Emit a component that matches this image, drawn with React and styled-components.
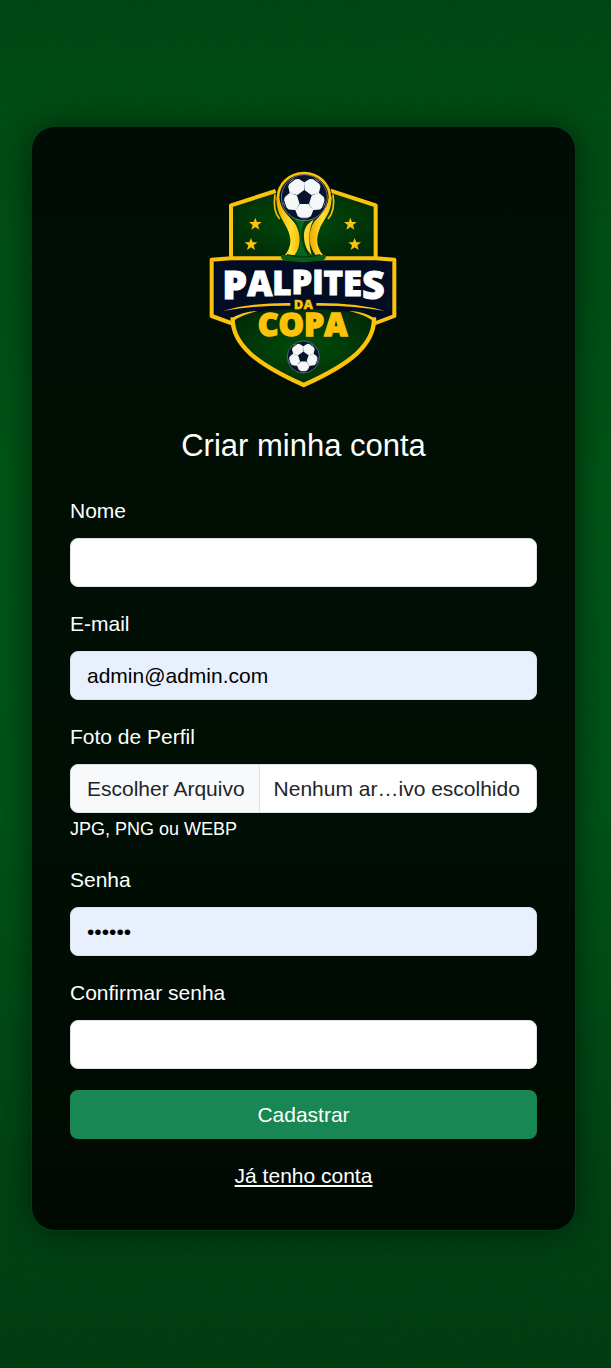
import React, { useState } from "react";
import styled, { createGlobalStyle } from "styled-components";

const GlobalStyle = createGlobalStyle`
  * {
    box-sizing: border-box;
  }
  body {
    margin: 0;
    background: #003d12;
    font-family: "Liberation Sans", Arial, sans-serif;
    font-size: 21px;
    color: #fff;
  }
`;

const Page = styled.main`
  position: relative;
  min-height: 100vh;
  padding: 126px 35px 137px 31px;
  background: linear-gradient(
    180deg,
    #004516 0%,
    #004c16 8%,
    #005519 35%,
    #00541a 60%,
    #004716 80%,
    #003f14 92%,
    #003a12 100%
  );
`;
const Grass = styled.svg`
  position: absolute;
  inset: 0;
  width: 100%;
  height: 100%;
  opacity: 0.15;
  pointer-events: none;
`;
const Card = styled.section`
  position: relative;
  display: flex;
  flex-direction: column;
  max-width: 640px;
  margin: 0 auto;
  padding: 38px 38px 39px;
  border: 1px solid #033d17;
  border-radius: 24px;
  background: linear-gradient(180deg, #000d04 0%, #000f05 50%, #000a02 100%);
  box-shadow: 0 0 36px rgba(0, 0, 0, 0.5);
`;
const Logo = styled.svg`
  width: 210px;
  height: 230px;
  margin: 0 auto;
`;
const Title = styled.h1`
  margin: 32px 0 30px;
  font-size: 31px;
  font-weight: 400;
  line-height: 38px;
  text-align: center;
`;
const Form = styled.form`
  display: flex;
  flex-direction: column;
  gap: 21px;
`;
const FieldGroup = styled.div`
  display: flex;
  flex-direction: column;
`;
const Label = styled.label`
  margin-bottom: 12px;
  line-height: 31px;
`;
const Input = styled.input`
  width: 100%;
  height: 49px;
  padding: 0 16px;
  border: 1px solid #dee2e6;
  border-radius: 8px;
  background: ${(props) => (props.$filled ? "#e8f0fe" : "#fff")};
  color: #000;
  font-family: inherit;
  font-size: 21px;
`;
const FileBox = styled.div`
  position: relative;
  display: flex;
  height: 49px;
  border: 1px solid #dee2e6;
  border-radius: 8px;
  overflow: hidden;
  background: #fff;
  color: #212529;
  line-height: 47px;
  white-space: nowrap;
`;
const FileButton = styled.span`
  padding: 0 14px 0 16px;
  border-right: 1px solid #dee2e6;
  background: #f8f9fa;
`;
const FileName = styled.span`
  flex: 1;
  padding: 0 14px;
  overflow: hidden;
`;
const FileInput = styled.input`
  position: absolute;
  inset: 0;
  width: 100%;
  opacity: 0;
  cursor: pointer;
`;
const HelpText = styled.small`
  margin-top: 2px;
  font-size: 18px;
  line-height: 28px;
`;
const SubmitButton = styled.button`
  height: 49px;
  border: none;
  border-radius: 8px;
  background: #198754;
  color: #fff;
  font-family: inherit;
  font-size: 21px;
  cursor: pointer;
`;
const LoginLink = styled.a`
  margin: 21px auto 0;
  color: #fff;
  line-height: 31px;
`;

const GOLD = "#fdc20a";
const NAVY = "#020c22";

const Ball = ({ x, y, scale }) => (
  <g transform={`translate(${x} ${y}) scale(${scale})`}>
    <circle r="69" fill="#07142c" stroke="#9eacb5" strokeWidth="2" />
    {[0, 72, 144, 216, 288].map((angle) => (
      <g key={angle} transform={`rotate(${angle})`}>
        <path
          d="M-12 21H12L25 37L18 54L11 58H-11L-18 54L-25 37Z"
          fill="#f5f7f8"
          stroke="#f5f7f8"
          strokeWidth="4"
          strokeLinejoin="round"
        />
        <path d="M-24 58Q0 72 24 58L12 63H-12Z" fill="#c6d0d6" />
      </g>
    ))}
  </g>
);

const Star = ({ x, y }) => (
  <path
    transform={`translate(${x} ${y})`}
    d="M0 -19L5 -6L19 -6L8 3L12 17L0 9L-12 17L-8 3L-19 -6L-5 -6Z"
    fill={GOLD}
  />
);

const BrandLogo = () => (
  <Logo viewBox="-2 0 630 690" role="img" aria-label="Palpites da Copa">
    <defs>
      <radialGradient id="field" cx="50%" cy="50%" r="60%">
        <stop offset="0" stopColor="#004d0a" />
        <stop offset="1" stopColor="#002a08" />
      </radialGradient>
      <linearGradient id="cup" x1="0" x2="1">
        <stop offset="0" stopColor="#f2a900" />
        <stop offset="0.6" stopColor="#ffe02e" />
        <stop offset="1" stopColor="#f8bd0a" />
      </linearGradient>
    </defs>

    {/* upper shield */}
    <path d="M94 282V121L228 78L310 60L392 77L528 121V282Z" fill="url(#field)" />
    <path
      d="M94 282V121L228 78M392 77L528 121V282"
      fill="none"
      stroke={GOLD}
      strokeWidth="12"
      strokeLinejoin="round"
    />
    <Star x={167} y={177} />
    <Star x={154} y={238} />
    <Star x={452} y={177} />
    <Star x={465} y={238} />

    {/* banner */}
    <path
      d="M36 284L94 280H528L584 284V453L528 474H94L36 453Z"
      fill={NAVY}
      stroke={GOLD}
      strokeWidth="12"
      strokeLinejoin="round"
    />

    {/* lower shield */}
    <path
      d="M99 457C165 438 240 432 312 432C385 432 455 438 523 457C526 540 450 598 312 660C174 598 96 540 99 457Z"
      fill="url(#field)"
    />
    <path
      d="M99 457C96 540 174 598 312 660C450 598 526 540 523 457"
      fill="none"
      stroke={GOLD}
      strokeWidth="13"
      strokeLinejoin="round"
    />
    <path d="M94 461Q130 439 175 438Q132 447 104 466Z" fill={GOLD} />
    <path d="M528 461Q492 439 447 438Q490 447 518 466Z" fill={GOLD} />
    <path d="M68 438Q150 413 272 414V422Q160 421 68 438Z" fill={GOLD} />
    <path d="M556 438Q472 413 350 414V422Q462 421 556 438Z" fill={GOLD} />

    {/* trophy */}
    <circle cx="313" cy="98" r="84" fill="#001006" />
    <path
      d="M268 145C300 190 290 245 260 276H362C335 245 330 190 358 145Z"
      fill="#023d12"
    />
    <path
      d="M240 124Q235 110 235 98A78 74 0 0 1 391 98Q391 110 386 124"
      fill="none"
      stroke={GOLD}
      strokeWidth="8"
    />
    <path
      d="M230 96C230 146 251 164 263 192C278 224 274 248 256 270H285C304 246 304 211 290 182C276 156 246 145 238 96Z"
      fill="url(#cup)"
    />
    <path
      d="M396 96C396 146 370 164 360 192C347 224 352 248 370 270H348C328 244 324 211 338 180C352 154 380 145 388 96Z"
      fill="url(#cup)"
    />
    <path
      d="M342 164C320 176 311 194 313 219C315 242 323 259 336 270C329 243 322 199 342 164Z"
      fill="#ffd52b"
    />
    <path
      d="M226 88C221 120 225 145 240 162M400 88C405 120 400 145 385 162"
      fill="none"
      stroke="#f8bd0a"
      strokeWidth="5"
    />
    <path
      d="M282 161C309 189 309 244 287 270H323C302 240 298 190 320 163Z"
      fill="#056719"
    />
    <path d="M246 270H377Q382 278 372 285Q312 298 250 285Q240 278 246 270Z" fill="#075c17" />
    <path d="M262 269Q312 282 362 269" fill="none" stroke="#003b0d" strokeWidth="4" />
    <Ball x={314} y={98} scale={1} />

    {/* letters grow toward both ends of the banner */}
    <g fill="#fff" stroke="#fff" strokeWidth="3" fontWeight="800">
      <text x="68" y="402" fontFamily="'Open Sans', sans-serif">
        <tspan y="402" fontSize="118">P</tspan>
        <tspan y="393" fontSize="104">A</tspan>
        <tspan y="389" fontSize="99">L</tspan>
        <tspan y="387" fontSize="98">P</tspan>
        <tspan y="387" fontSize="98">I</tspan>
        <tspan y="389" fontSize="99">T</tspan>
        <tspan y="393" fontSize="104">E</tspan>
        <tspan y="401" fontSize="118">S</tspan>
      </text>
    </g>
    <g
      fill={GOLD}
      stroke={GOLD}
      fontFamily="'Open Sans', sans-serif"
      fontWeight="800"
      textAnchor="middle"
    >
      <text x="311" y="431" fontSize="39">
        DA
      </text>
      <text x="309" y="514" fontSize="96" strokeWidth="4">
        COPA
      </text>
    </g>
    <Ball x={311} y={576} scale={0.7} />
  </Logo>
);

const TextField = (props) => {
  const { id, label, type = "text", defaultValue = "" } = props;
  return (
    <FieldGroup>
      <Label htmlFor={id}>{label}</Label>
      <Input
        id={id}
        name={id}
        type={type}
        defaultValue={defaultValue}
        $filled={defaultValue !== ""}
      />
    </FieldGroup>
  );
};

const App = () => {
  const [fileName, setFileName] = useState("Nenhum ar…ivo escolhido");

  const handleFile = (e) => {
    const file = e.target.files[0];
    setFileName(file ? file.name : "Nenhum ar…ivo escolhido");
  };

  return (
    <Page>
      <GlobalStyle />
      <Grass aria-hidden="true">
        <filter id="grass">
          <feTurbulence type="fractalNoise" baseFrequency="0.12" numOctaves="3" />
          <feColorMatrix values="0 0 0 0 0  0 0 0 0 0.1  0 0 0 0 0  1 0 0 0 0" />
        </filter>
        <rect width="100%" height="100%" filter="url(#grass)" />
      </Grass>
      <Card>
        <BrandLogo />
        <Title>Criar minha conta</Title>
        <Form onSubmit={(e) => e.preventDefault()}>
          <TextField id="nome" label="Nome" />
          <TextField id="email" label="E-mail" type="email" defaultValue="admin@admin.com" />
          <FieldGroup>
            <Label htmlFor="foto">Foto de Perfil</Label>
            <FileBox>
              <FileButton>Escolher Arquivo</FileButton>
              <FileName>{fileName}</FileName>
              <FileInput
                id="foto"
                name="foto"
                type="file"
                accept=".jpg,.png,.webp"
                onChange={handleFile}
              />
            </FileBox>
            <HelpText>JPG, PNG ou WEBP</HelpText>
          </FieldGroup>
          <TextField id="senha" label="Senha" type="password" defaultValue="123456" />
          <TextField id="confirmar" label="Confirmar senha" type="password" />
          <SubmitButton type="submit">Cadastrar</SubmitButton>
        </Form>
        <LoginLink href="#login">Já tenho conta</LoginLink>
      </Card>
    </Page>
  );
};

export default App;
